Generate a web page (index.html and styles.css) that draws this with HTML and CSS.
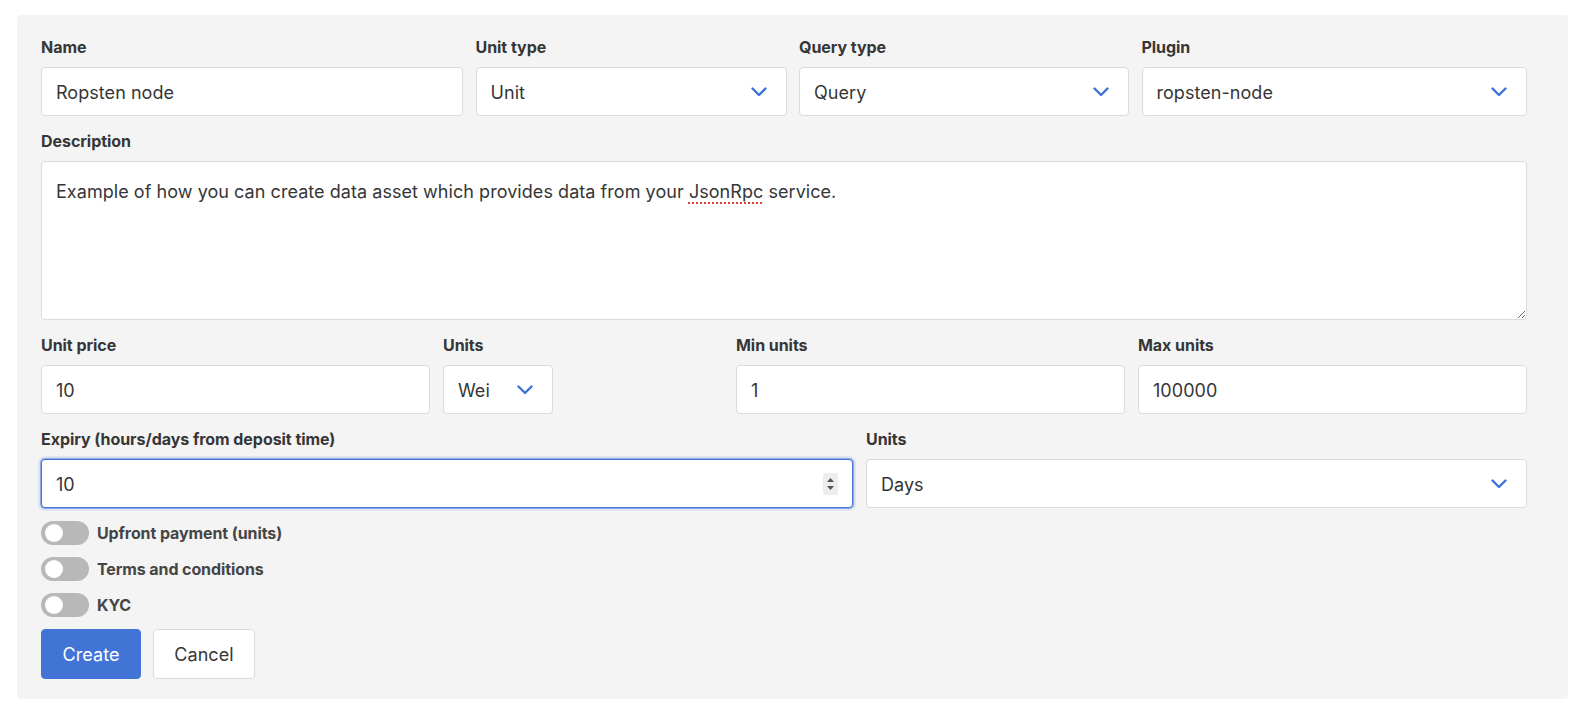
FILE: index.html
```html
<!DOCTYPE html>
<html lang="en">
<head>
<meta charset="utf-8">
<title>Create data asset</title>
<link rel="stylesheet" href="styles.css">
</head>
<body>
<div class="panel">
  <form class="form">
    <div class="row row-top">
      <div class="field">
        <label class="label">Name</label>
        <div class="input">Ropsten node</div>
      </div>
      <div class="field">
        <label class="label">Unit type</label>
        <div class="input select"><span>Unit</span><svg class="chev" viewBox="0 0 16 10"><path d="M1.5 1.5 L8 8 L14.5 1.5"/></svg></div>
      </div>
      <div class="field">
        <label class="label">Query type</label>
        <div class="input select"><span>Query</span><svg class="chev" viewBox="0 0 16 10"><path d="M1.5 1.5 L8 8 L14.5 1.5"/></svg></div>
      </div>
      <div class="field">
        <label class="label">Plugin</label>
        <div class="input select"><span>ropsten-node</span><svg class="chev" viewBox="0 0 16 10"><path d="M1.5 1.5 L8 8 L14.5 1.5"/></svg></div>
      </div>
    </div>

    <div class="field">
      <label class="label">Description</label>
      <div class="textarea">Example of how you can create data asset which provides data from your <span class="spell">JsonRpc</span> service.</div>
    </div>

    <div class="row row-price">
      <div class="field">
        <label class="label">Unit price</label>
        <div class="input">10</div>
      </div>
      <div class="field">
        <label class="label">Units</label>
        <div class="input select small"><span>Wei</span><svg class="chev" viewBox="0 0 16 10"><path d="M1.5 1.5 L8 8 L14.5 1.5"/></svg></div>
      </div>
      <div class="field">
        <label class="label">Min units</label>
        <div class="input">1</div>
      </div>
      <div class="field">
        <label class="label">Max units</label>
        <div class="input">100000</div>
      </div>
    </div>

    <div class="row row-expiry">
      <div class="field">
        <label class="label">Expiry (hours/days from deposit time)</label>
        <div class="input focused">10
          <span class="spinner"><svg viewBox="0 0 15 22"><path d="M4 9 L7.5 5 L11 9 Z"/><path d="M4 13 L7.5 17 L11 13 Z"/></svg></span>
        </div>
      </div>
      <div class="field">
        <label class="label">Units</label>
        <div class="input select"><span>Days</span><svg class="chev" viewBox="0 0 16 10"><path d="M1.5 1.5 L8 8 L14.5 1.5"/></svg></div>
      </div>
    </div>

    <div class="toggles">
      <div class="toggle-row"><span class="toggle"><span class="knob"></span></span><span class="toggle-label">Upfront payment (units)</span></div>
      <div class="toggle-row"><span class="toggle"><span class="knob"></span></span><span class="toggle-label">Terms and conditions</span></div>
      <div class="toggle-row"><span class="toggle"><span class="knob"></span></span><span class="toggle-label">KYC</span></div>
    </div>

    <div class="buttons">
      <button type="button" class="btn btn-primary">Create</button>
      <button type="button" class="btn btn-default">Cancel</button>
    </div>
  </form>
</div>
</body>
</html>
```
FILE: styles.css
```css
* { box-sizing: border-box; }
html, body { margin: 0; padding: 0; background: #ffffff; }
body {
  font-family: "Inter", "Liberation Sans", sans-serif;
  color: #363636;
  padding: 15px 16px 0 17px;
}
.panel {
  background: #f4f4f4;
  border-radius: 4px;
  padding: 20px 41px 20px 24px;
}
.form {
  display: flex;
  flex-direction: column;
  gap: 13px;
}
.row { display: grid; column-gap: 13px; }
.row-top { grid-template-columns: 422px 311px 330px 1fr; column-gap: 12.5px; }
.row-price { grid-template-columns: 389px 280px 389px 1fr; }
.row-expiry { grid-template-columns: 812px 1fr; }

.field { display: flex; flex-direction: column; align-items: stretch; }
.label {
  display: block;
  font-size: 16px;
  font-weight: 700;
  line-height: 24px;
  color: #363636;
  margin-bottom: 8px;
  letter-spacing: -0.05px;
}
.input {
  position: relative;
  height: 49px;
  background: #ffffff;
  border: 1px solid #dbdbdb;
  border-radius: 4px;
  padding: 3px 14px 0 14px;
  font-size: 18px;
  line-height: 44px;
  letter-spacing: 0.05px;
  color: #363636;
  display: flex;
  align-items: center;
}
.select { justify-content: space-between; padding-right: 19px; }
.select .chev { margin-top: -3px; }
.select.small { width: 110px; }
.chev {
  width: 16px;
  height: 10px;
  fill: none;
  stroke: #3b73d8;
  stroke-width: 2.4;
  stroke-linecap: round;
  stroke-linejoin: round;
  flex: none;
}
.focused {
  border-color: #4577d6;
  box-shadow: 0 0 0 1px rgba(69, 119, 214, 0.55), 0 0 0 3px rgba(69, 119, 214, 0.12);
}
.spinner {
  position: absolute;
  right: 14px;
  top: 13px;
  width: 15px;
  height: 22px;
  background: #ededed;
  border-radius: 2px;
}
.spinner svg { display: block; width: 15px; height: 22px; fill: #555; }

.textarea {
  height: 159px;
  background: #ffffff;
  border: 1px solid #dbdbdb;
  border-radius: 4px;
  padding: 16px 14px 14px 14px;
  font-size: 18px;
  line-height: 27px;
  letter-spacing: 0.05px;
  color: #363636;
  resize: vertical;
  overflow: auto;
}
.spell {
  text-decoration: underline dotted #e0403a;
  text-decoration-thickness: 1.5px;
  text-underline-offset: 4px;
}

.toggles { display: flex; flex-direction: column; gap: 12px; margin-bottom: -1px; }
.toggle-row { display: flex; align-items: center; gap: 8px; height: 24px; }
.toggle {
  position: relative;
  width: 48px;
  height: 24px;
  border-radius: 12px;
  background: #b8b8b8;
  flex: none;
}
.knob {
  position: absolute;
  left: 4px;
  top: 3px;
  width: 18px;
  height: 18px;
  border-radius: 50%;
  background: #ffffff;
}
.toggle-label {
  font-size: 16px;
  font-weight: 700;
  color: #454545;
  letter-spacing: -0.1px;
}

.buttons { display: flex; gap: 12px; }
.btn {
  height: 50px;
  border-radius: 4px;
  font-family: "Inter", "Liberation Sans", sans-serif;
  font-size: 18px;
  letter-spacing: 0.1px;
  padding: 0 20px;
  cursor: pointer;
}
.btn-primary {
  background: #4274d6;
  border: 1px solid #4274d6;
  color: #ffffff;
  width: 100px;
}
.btn-default {
  background: #ffffff;
  border: 1px solid #dbdbdb;
  color: #363636;
  width: 102px;
}
```
